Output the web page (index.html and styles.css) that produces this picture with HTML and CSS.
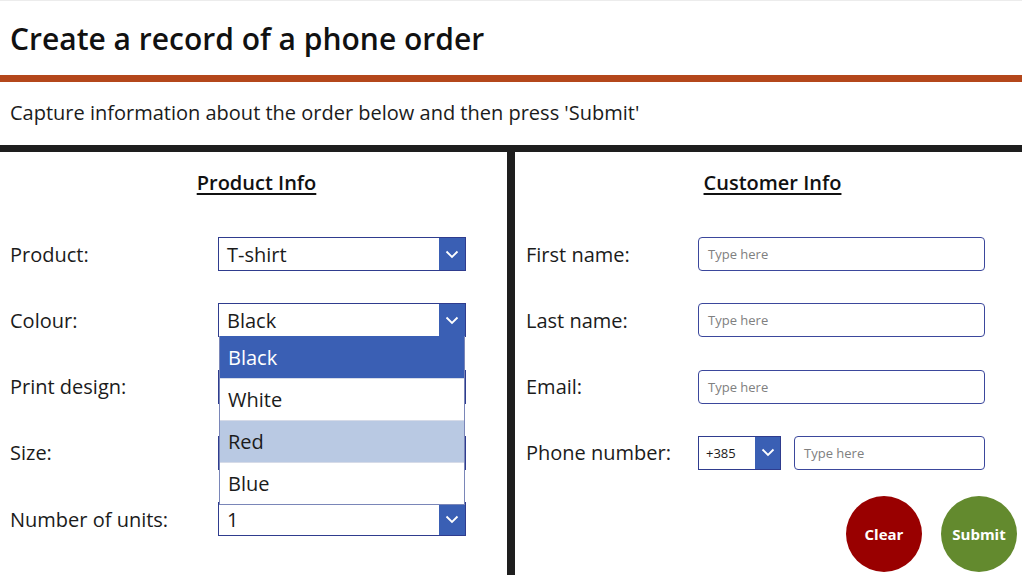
FILE: index.html
```html
<!DOCTYPE html>
<html>
<head>
<meta charset="utf-8">
<link rel="stylesheet" href="styles.css">
</head>
<body>
<div class="page">
  <header class="header">
    <h1 class="title">Create a record of a phone order</h1>
  </header>
  <div class="bar-orange"></div>
  <div class="subtitle">Capture information about the order below and then press 'Submit'</div>
  <div class="bar-black"></div>
  <main class="main">
    <section class="panel left">
      <h2 class="panel-title">Product Info</h2>
      <div class="rows">
        <div class="row">
          <span class="label">Product:</span>
          <div class="dropdown"><span class="dd-text">T-shirt</span><span class="dd-arrow"><svg width="14" height="9" viewBox="0 0 14 9"><path d="M1.5 1.5 L7 7 L12.5 1.5" fill="none" stroke="#fff" stroke-width="1.8"/></svg></span></div>
        </div>
        <div class="row">
          <span class="label">Colour:</span>
          <div class="dropdown open"><span class="dd-text">Black</span><span class="dd-arrow"><svg width="14" height="9" viewBox="0 0 14 9"><path d="M1.5 1.5 L7 7 L12.5 1.5" fill="none" stroke="#fff" stroke-width="1.8"/></svg></span>
            <ul class="dd-list">
              <li class="dd-item selected">Black</li>
              <li class="dd-item">White</li>
              <li class="dd-item hover">Red</li>
              <li class="dd-item">Blue</li>
            </ul>
          </div>
        </div>
        <div class="row">
          <span class="label">Print design:</span>
          <div class="dropdown"><span class="dd-text"></span><span class="dd-arrow"><svg width="14" height="9" viewBox="0 0 14 9"><path d="M1.5 1.5 L7 7 L12.5 1.5" fill="none" stroke="#fff" stroke-width="1.8"/></svg></span></div>
        </div>
        <div class="row">
          <span class="label">Size:</span>
          <div class="dropdown"><span class="dd-text"></span><span class="dd-arrow"><svg width="14" height="9" viewBox="0 0 14 9"><path d="M1.5 1.5 L7 7 L12.5 1.5" fill="none" stroke="#fff" stroke-width="1.8"/></svg></span></div>
        </div>
        <div class="row">
          <span class="label">Number of units:</span>
          <div class="dropdown"><span class="dd-text">1</span><span class="dd-arrow"><svg width="14" height="9" viewBox="0 0 14 9"><path d="M1.5 1.5 L7 7 L12.5 1.5" fill="none" stroke="#fff" stroke-width="1.8"/></svg></span></div>
        </div>
      </div>
    </section>
    <div class="divider"></div>
    <section class="panel right">
      <h2 class="panel-title">Customer Info</h2>
      <div class="rows">
        <div class="row">
          <span class="label label-r">First name:</span>
          <div class="input">Type here</div>
        </div>
        <div class="row">
          <span class="label label-r">Last name:</span>
          <div class="input">Type here</div>
        </div>
        <div class="row">
          <span class="label label-r">Email:</span>
          <div class="input">Type here</div>
        </div>
        <div class="row">
          <span class="label label-r">Phone number:</span>
          <div class="phone">
            <div class="dropdown small"><span class="dd-text">+385</span><span class="dd-arrow"><svg width="14" height="9" viewBox="0 0 14 9"><path d="M1.5 1.5 L7 7 L12.5 1.5" fill="none" stroke="#fff" stroke-width="1.8"/></svg></span></div>
            <div class="input phone-input">Type here</div>
          </div>
        </div>
      </div>
      <div class="buttons">
        <button class="btn clear">Clear</button>
        <button class="btn submit">Submit</button>
      </div>
    </section>
  </main>
</div>
</body>
</html>
```

FILE: styles.css
```css
* { box-sizing: border-box; }
html, body { margin: 0; padding: 0; background: #fff; }
body {
  font-family: "Open Sans", "Noto Sans", sans-serif;
  color: #1b1b1b;
  width: 1022px;
  height: 575px;
  overflow: hidden;
}
.page { width: 1022px; height: 575px; display: flex; flex-direction: column; }
.header {
  height: 75px;
  border-top: 1px solid #ececec;
  display: flex;
  align-items: center;
  padding-left: 10px;
}
.title {
  margin: 0;
  font-size: 30px;
  font-weight: 600;
  color: #111;
  letter-spacing: 0;
}
.bar-orange { height: 7px; background: #b4471b; }
.subtitle {
  height: 63px;
  display: flex;
  align-items: center;
  padding-left: 10px;
  font-size: 20px;
  color: #1b1b1b;
  padding-bottom: 2px;
}
.bar-black { height: 7px; background: #1e1e1e; }
.main { flex: 1; display: flex; }
.panel { position: relative; }
.left { width: 507px; }
.divider { width: 8px; background: #1e1e1e; }
.right { width: 507px; }
.panel-title {
  margin: 18px 0 0;
  text-align: center;
  font-size: 20px;
  font-weight: 600;
  text-decoration: underline;
  text-underline-offset: 3px;
  text-decoration-thickness: 1.5px;
  color: #111;
  line-height: 26px;
}
.left .panel-title { padding-left: 6px; }
.right .panel-title { padding-left: 8px; }
.rows {
  margin-top: 41px;
  display: flex;
  flex-direction: column;
  gap: 32.25px;
}
.row {
  height: 34px;
  display: flex;
  align-items: center;
}
.label {
  font-size: 20px;
  width: 218px;
  padding-left: 10px;
  color: #1b1b1b;
}
.label-r { width: 183px; padding-left: 11px; }
.dropdown {
  position: relative;
  width: 248px;
  height: 34px;
  border: 1px solid #2f3c8e;
  display: flex;
  align-items: stretch;
  background: #fff;
}
.dd-text {
  flex: 1;
  font-size: 20px;
  padding-left: 8px;
  display: flex;
  align-items: center;
  color: #1b1b1b;
}
.dd-arrow {
  width: 26px;
  background: #3a5fb4;
  display: flex;
  align-items: center;
  justify-content: center;
}
.dd-list {
  position: absolute;
  left: 0;
  top: 32px;
  width: 246px;
  margin: 0;
  padding: 0;
  list-style: none;
  border: 1px solid #7a86b8;
  border-top: none;
  background: #fff;
  z-index: 5;
}
.dd-item {
  height: 42px;
  display: flex;
  align-items: center;
  padding-left: 8px;
  font-size: 20px;
  color: #1b1b1b;
  border-top: 1px solid #d6dbe8;
}
.dd-item.selected { background: #3a5fb4; color: #fff; border-top: none; }
.dd-item.hover { background: #b9c9e3; }
.input {
  width: 287px;
  height: 34px;
  border: 1.5px solid #3b479c;
  border-radius: 4px;
  font-size: 13px;
  color: #808080;
  display: flex;
  align-items: center;
  padding-left: 9px;
}
.phone { display: flex; gap: 13px; }
.dropdown.small { width: 83px; height: 34px; }
.dropdown.small .dd-text { font-size: 13px; padding-left: 7px; }
.dropdown.small .dd-arrow { width: 25px; }
.phone-input { width: 191px; }
.buttons {
  display: flex;
  justify-content: flex-end;
  gap: 19px;
  padding-right: 5px;
  margin-top: 26px;
}
.btn {
  width: 76px;
  height: 76px;
  border-radius: 50%;
  border: none;
  color: #fff;
  font-family: "Open Sans", "Noto Sans", sans-serif;
  font-weight: 700;
  font-size: 15px;
  padding: 0;
}
.clear { background: #990000; }
.submit { background: #638a2e; }
```
